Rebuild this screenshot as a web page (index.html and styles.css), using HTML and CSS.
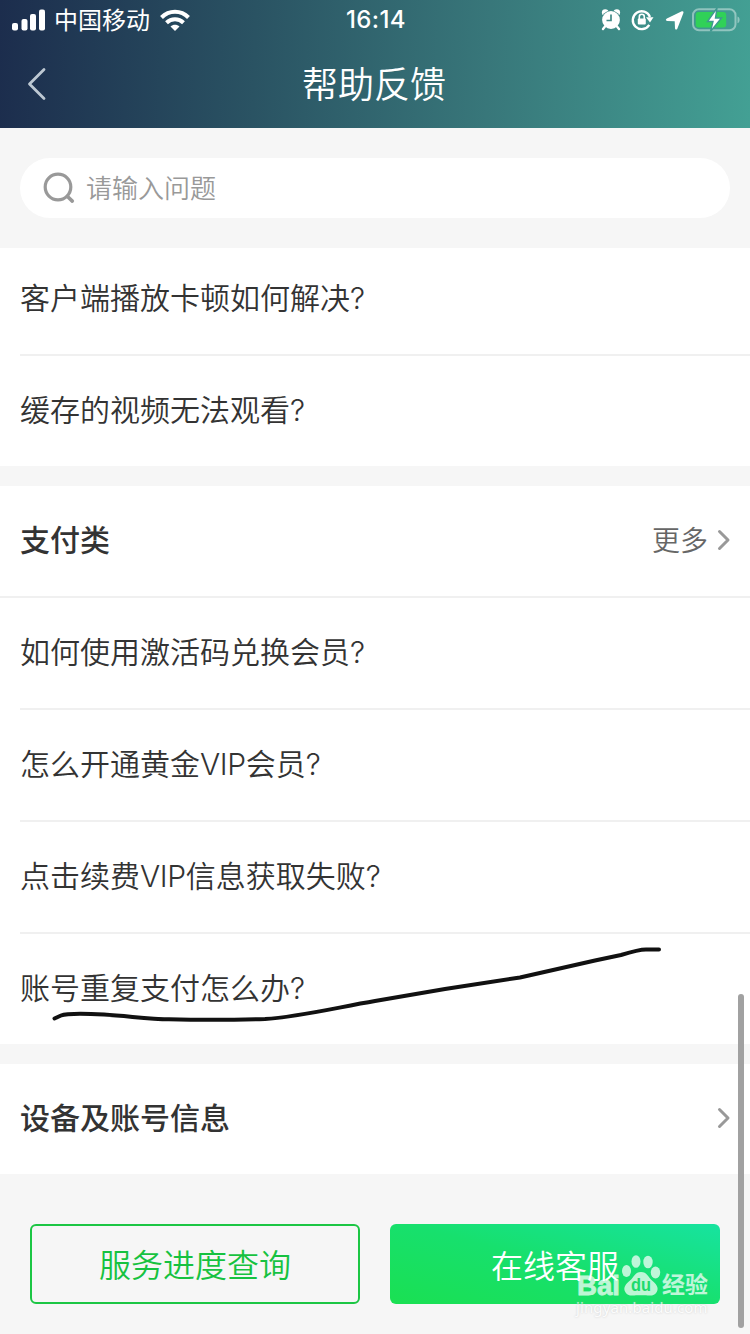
FILE: index.html
```html
<!DOCTYPE html>
<html lang="zh-CN">
<head>
<meta charset="utf-8">
<title>帮助反馈</title>
<link rel="stylesheet" href="styles.css">
</head>
<body>
<div class="screen">
  <header class="top">
    <div class="status">
      <div class="status-left">
        <svg class="signal" width="34" height="22" viewBox="0 0 34 22" fill="#fff"><rect x="0" y="14" width="6" height="7.500" rx="2"/><rect x="9.500" y="10" width="6" height="11.500" rx="2"/><rect x="18" y="5" width="6" height="16.500" rx="2"/><rect x="27" y="0.500" width="6" height="21" rx="2"/></svg>
        <span class="carrier">中国移动</span>
        <svg class="wifi" width="30" height="22" viewBox="0 0 30 22" fill="none" stroke="#fff" stroke-width="4"><path d="M1.500 8.500C9 .8 21 .8 28.500 8.500"/><path d="M6.500 13.800c4.800-4.700 12.200-4.700 17 0"/><path d="M15 22l-4.500-4.500c2.600-2.400 6.400-2.400 9 0z" fill="#fff" stroke="none"/></svg>
      </div>
      <span class="clock">16:14</span>
      <div class="status-right">
        <svg width="20" height="22" viewBox="0 0 20 22"><g fill="#fff"><circle cx="4.200" cy="3.500" r="3.300"/><circle cx="15.800" cy="3.500" r="3.300"/></g><circle cx="10" cy="11" r="9.600" fill="#418986"/><circle cx="10" cy="11" r="8.900" fill="#fff"/><path d="M4 17.500L2 20M16 17.500l2 2.500" stroke="#fff" stroke-width="2.400" stroke-linecap="round"/><path d="M10 5.500V11.500H5.500" fill="none" stroke="#418986" stroke-width="1.700"/></svg>
        <svg width="24" height="22" viewBox="0 0 24 22"><path d="M18.300 15.800A8.900 8.900 0 1 1 19 8" fill="none" stroke="#fff" stroke-width="2.300"/><path d="M15 8.300h7.500L19 13.500z" fill="#fff"/><rect x="6.800" y="9.400" width="8" height="6.200" rx="1" fill="#fff"/><path d="M8.300 10V7.800a2.500 2.500 0 0 1 5 0V10" fill="none" stroke="#fff" stroke-width="1.600"/></svg>
        <svg width="20" height="21" viewBox="0 0 20 21"><path d="M16.300 1.600C18 .8 19 1.600 18.300 3.300L12.300 18.700c-.6 1.400-2.200 1.100-2.300-.4L9.700 11.300 2.200 10.900C.5 10.800.4 9.200 1.900 8.500z" fill="#fff"/></svg>
        <svg width="48" height="24" viewBox="0 0 48 24"><rect x="1" y="1.300" width="42.500" height="21" rx="6" fill="none" stroke="#fff" stroke-opacity=".42" stroke-width="2"/><path d="M45.500 8.500c2.800.6 2.800 6 0 6.800z" fill="#fff" opacity=".42"/><rect x="3.700" y="4" width="30.500" height="15.500" rx="3" fill="#30d158"/><path d="M25 0L15.500 13.500H21L18.500 23.500 29.500 10H23.500z" fill="#fff" stroke="#3e9890" stroke-width="1.400"/></svg>
      </div>
    </div>
    <div class="navbar">
      <svg class="back" width="20" height="34" viewBox="0 0 20 34"><path d="M17 2.500L2.500 17 17 31.500" fill="none" stroke="#bdc8d2" stroke-width="2.800" stroke-linecap="round" stroke-linejoin="round"/></svg>
      <h1 class="title">帮助反馈</h1>
    </div>
  </header>

  <div class="search-area">
    <div class="search">
      <svg width="34" height="34" viewBox="0 0 34 34" fill="none" stroke="#999"><circle cx="16" cy="16" r="12.800" stroke-width="3.200"/><path d="M25.500 25.500l4.800 4.600" stroke-width="3.600" stroke-linecap="round"/></svg>
      <span>请输入问题</span>
    </div>
  </div>

  <main>
    <section class="group">
      <div class="row row-clipped">客户端播放卡顿如何解决<span class="latin">?</span></div>
      <div class="row">缓存的视频无法观看<span class="latin">?</span></div>
    </section>
    <section class="group">
      <div class="group-head group-head-lined"><h2>支付类</h2><div class="more"><span>更多</span><svg width="14" height="22" viewBox="0 0 14 22"><path d="M2.500 2.500L11 11l-8.500 8.500" fill="none" stroke="#999" stroke-width="3" stroke-linecap="round" stroke-linejoin="round"/></svg></div></div>
      <div class="row">如何使用激活码兑换会员<span class="latin">?</span></div>
      <div class="row">怎么开通黄金<span class="latin vip">VIP</span>会员<span class="latin">?</span></div>
      <div class="row">点击续费<span class="latin vip">VIP</span>信息获取失败<span class="latin">?</span></div>
      <div class="row">账号重复支付怎么办<span class="latin">?</span></div>
    </section>
    <section class="group">
      <div class="group-head"><h2>设备及账号信息</h2><div class="more"><svg width="14" height="22" viewBox="0 0 14 22"><path d="M2.500 2.500L11 11l-8.500 8.500" fill="none" stroke="#999" stroke-width="3" stroke-linecap="round" stroke-linejoin="round"/></svg></div></div>
    </section>
  </main>

  <footer class="actions">
    <div class="btn btn-outline">服务进度查询</div>
    <div class="btn btn-solid">在线客服</div>
  </footer>

  <svg class="pen" width="616" height="84" viewBox="0 0 616 84"><path d="M5.500 78.500L12 75.500C17 73.500 35 73.500 55 74.500C80 76 100 79.300 120 79.300C150 80 190 79.800 216 79C250 77 290 67 326 61L396 49L471 37.500L546 20.500L572 15C585 11 590 9.500 597 9.500H610" fill="none" stroke="#111" stroke-width="4" stroke-linecap="round" stroke-linejoin="round"/></svg>

  <div class="watermark">
    <svg width="134" height="48" viewBox="0 0 134 48">
      <text class="wm-brand" x="1" y="40.500" textLength="43" lengthAdjust="spacingAndGlyphs">Bai</text>
      <g><ellipse cx="50.500" cy="17" rx="4.500" ry="6"/><ellipse cx="60" cy="7.500" rx="4.500" ry="6.300"/><ellipse cx="72" cy="8" rx="4.700" ry="6.300"/><ellipse cx="79.500" cy="18.500" rx="4.700" ry="6"/><path d="M65 18c-6 0-7 5-11 8.500-4 3.500-7 6.500-5 11s7 4.300 11 3.800h10c4 .5 9 .7 11-3.800s-1-7.500-5-11c-4-3.500-5-8.500-11-8.500z"/></g>
      <text class="wm-du" x="55" y="37" textLength="20" lengthAdjust="spacingAndGlyphs">du</text>
      <text class="wm-cn" x="86" y="39">经验</text>
    </svg>
    <div class="wm-url">jingyan.baidu.com</div>
  </div>
  <div class="scrollbar"></div>
</div>
</body>
</html>
```
FILE: styles.css
```css
* { box-sizing: border-box; }
body {
  margin: 0;
  background: #f6f6f6;
  color: #333;
  font-family: "Noto Sans CJK SC", sans-serif;
}
svg { display: block; flex: none; }
.screen {
  position: relative;
  width: 750px;
  height: 1334px;
  overflow: hidden;
}
.top {
  height: 128px;
  color: #fff;
  background: linear-gradient(92deg, #1c2d4d 0%, #2a5363 34%, #38777a 65%, #43a094 100%);
}
.status {
  display: grid;
  grid-template-columns: 1fr auto 1fr;
  align-items: center;
  height: 40px;
  padding: 0 10px 0 12px;
}
.status-left { display: flex; align-items: center; }
.carrier { margin: 0 10px 0 8px; font-size: 24px; line-height: 36px; padding-bottom: 2px; }
.clock {
  font-family: Inter, sans-serif;
  font-size: 24px;
  line-height: 40px;
  font-weight: 450;
  letter-spacing: .4px;
}
.status-right { display: flex; align-items: center; justify-content: flex-end; }
.status-right svg:nth-child(2) { margin-left: 10px; }
.status-right svg:nth-child(3) { margin-left: 10px; }
.status-right svg:nth-child(4) { margin-left: 7px; }
.navbar {
  display: grid;
  grid-template-columns: 60px 1fr 62px;
  align-items: center;
  height: 88px;
}
.back { margin-left: 27px; }
.title {
  margin: 0;
  padding-bottom: 4px;
  text-align: center;
  font-size: 36px;
  font-weight: 350;
  line-height: 84px;
}
.search-area { padding: 30px 20px; }
.search {
  display: flex;
  align-items: center;
  gap: 10px;
  height: 60px;
  padding-left: 22px;
  border-radius: 30px;
  background: #fff;
  color: #999;
  font-size: 26px;
  font-weight: 350;
  line-height: 58px;
}
.search span { padding-bottom: 2px; }
.group { background: #fff; }
.group + .group { margin-top: 20px; }
.row {
  height: 110px;
  margin-left: 20px;
  font-size: 30px;
  font-weight: 350;
  line-height: 104px;
  white-space: nowrap;
}
.row + .row {
  height: 112px;
  border-top: 2px solid #f0f0f0;
}
.row-clipped { height: 106px; line-height: 96px; }
.latin { font-family: Inter, sans-serif; font-weight: 300; }
.vip { letter-spacing: -.4px; }
.group-head {
  display: flex;
  align-items: center;
  justify-content: space-between;
  height: 110px;
  padding: 0 19px 0 20px;
}
.group-head-lined { height: 112px; border-bottom: 2px solid #f0f0f0; }
.group-head h2 {
  margin: 0;
  padding-bottom: 6px;
  font-size: 30px;
  font-weight: 500;
  line-height: 104px;
}
.more {
  display: flex;
  align-items: center;
  gap: 9px;
  padding-bottom: 2px;
  color: #666;
  font-size: 28px;
  font-weight: 350;
}
.more span { padding-bottom: 2px; line-height: 104px; }
.actions {
  display: grid;
  grid-template-columns: 1fr 1fr;
  gap: 30px;
  padding: 50px 30px 30px;
}
.btn {
  height: 80px;
  border-radius: 6px;
  text-align: center;
  font-size: 32px;
  font-weight: 350;
  line-height: 81px;
}
.btn-outline { border: 2px solid #1cc644; color: #16c240; line-height: 74px; }
.btn-solid {
  color: #fff;
  background: linear-gradient(15deg, #1ae052 0%, #17e06d 50%, #17e3a0 100%);
}
.pen { position: absolute; left: 49px; top: 940px; }
.watermark { position: absolute; left: 576px; top: 1254px; opacity: .72; fill: #fff; }
.wm-brand { font: bold 28px "Liberation Sans", sans-serif; stroke: #fff; stroke-width: .8px; }
.wm-du { font: bold 18px "Liberation Sans", sans-serif; fill: #22d96c; }
.wm-cn { font: 700 23px "Noto Sans CJK SC", sans-serif; }
.wm-url {
  margin-top: -5px;
  color: #fff;
  font: 15px/20px "Noto Sans", sans-serif;
  letter-spacing: .1px;
  text-shadow: 0 0 2px #bbb;
}
.scrollbar {
  position: absolute;
  left: 738px;
  top: 994px;
  width: 6px;
  height: 334px;
  border-radius: 3px;
  background: #a1a1a1;
}
```
